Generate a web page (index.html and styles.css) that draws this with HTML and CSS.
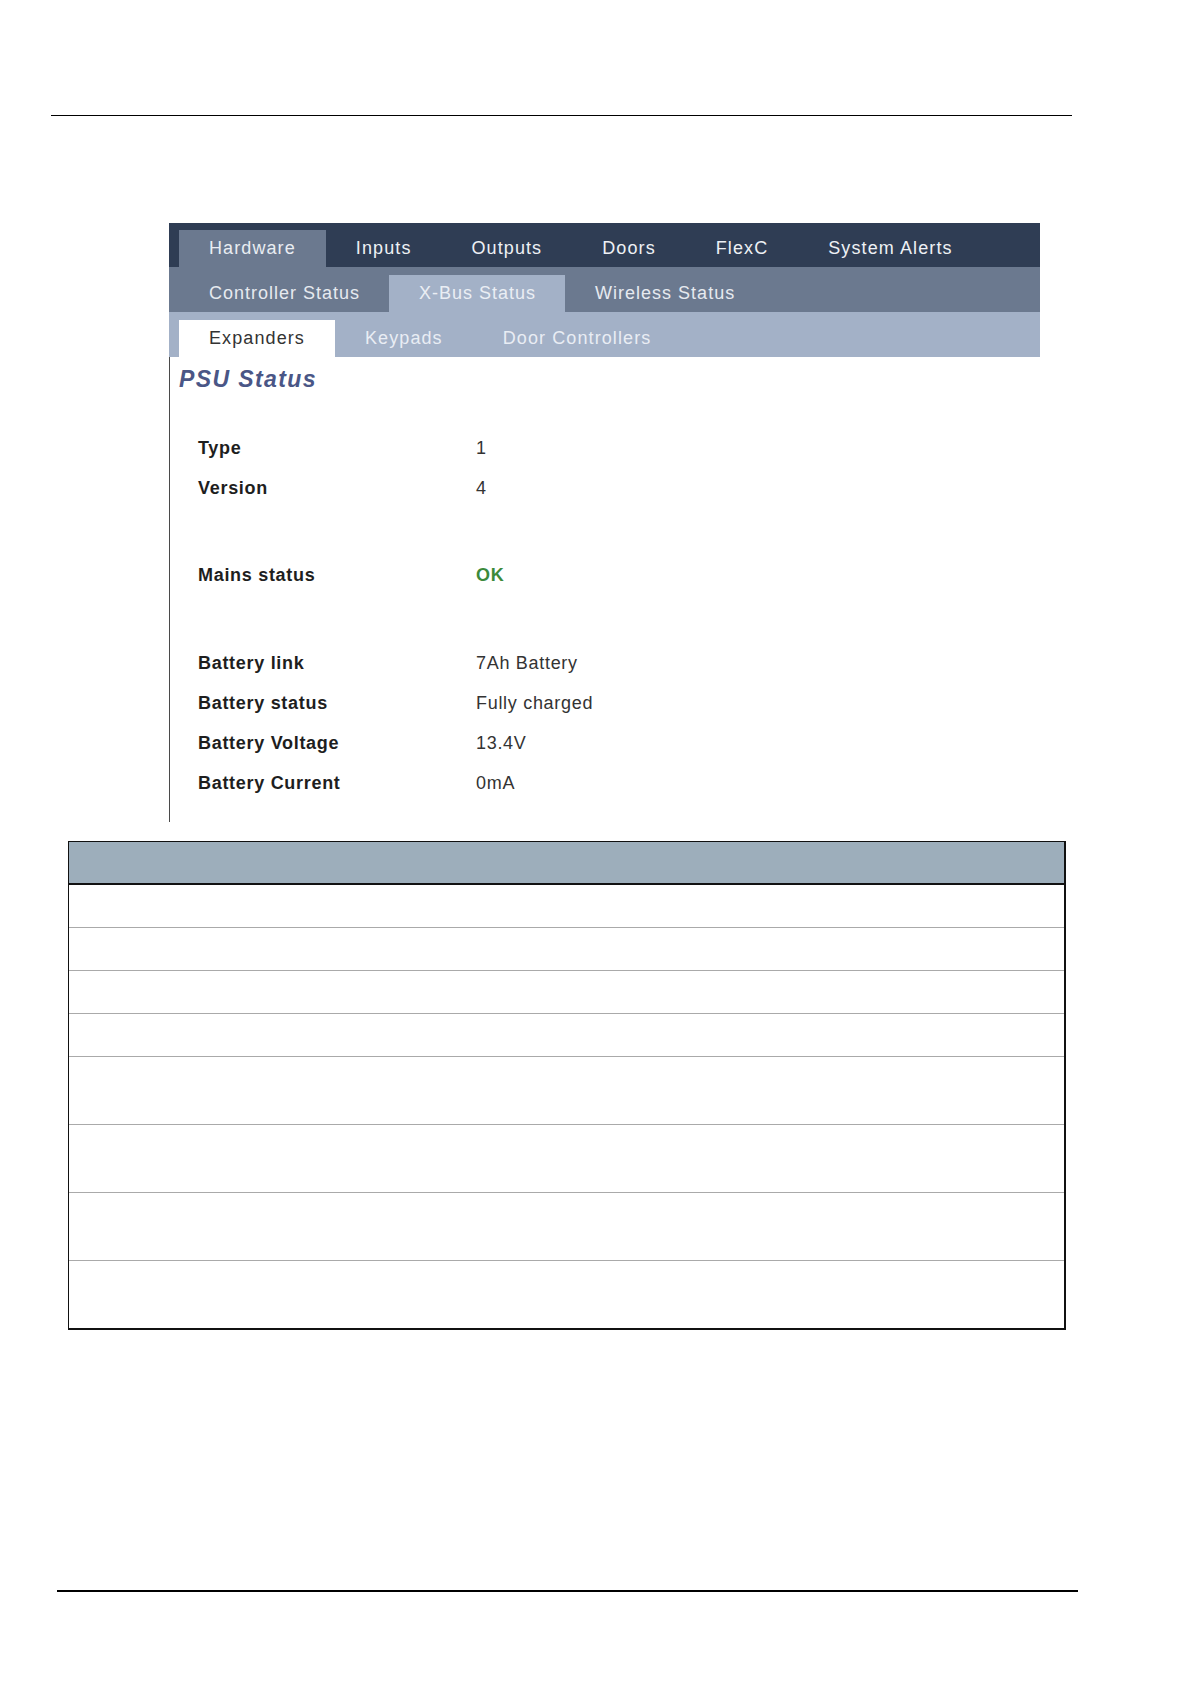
FILE: index.html
```html
<!DOCTYPE html>
<html>
<head>
<meta charset="utf-8">
<title>PSU Status</title>
<link rel="stylesheet" href="styles.css">
</head>
<body>
<div class="page">
  <div class="top-rule"></div>

  <div class="panel">
    <div class="nav nav-1">
      <div class="tab active">Hardware</div>
      <div class="tab">Inputs</div>
      <div class="tab">Outputs</div>
      <div class="tab">Doors</div>
      <div class="tab">FlexC</div>
      <div class="tab">System Alerts</div>
    </div>
    <div class="nav nav-2">
      <div class="tab">Controller Status</div>
      <div class="tab active">X-Bus Status</div>
      <div class="tab">Wireless Status</div>
    </div>
    <div class="nav nav-3">
      <div class="tab active">Expanders</div>
      <div class="tab">Keypads</div>
      <div class="tab">Door Controllers</div>
    </div>

    <div class="content">
      <h1 class="title">PSU Status</h1>
      <div class="fields">
        <div class="label">Type</div><div class="value">1</div>
        <div class="label">Version</div><div class="value">4</div>
        <div class="spacer"></div>
        <div class="label">Mains status</div><div class="value ok">OK</div>
        <div class="spacer"></div>
        <div class="label">Battery link</div><div class="value">7Ah Battery</div>
        <div class="label">Battery status</div><div class="value">Fully charged</div>
        <div class="label">Battery Voltage</div><div class="value">13.4V</div>
        <div class="label">Battery Current</div><div class="value">0mA</div>
      </div>
    </div>
  </div>

  <div class="doc-table">
    <div class="doc-head"></div>
    <div class="doc-row"></div>
    <div class="doc-row"></div>
    <div class="doc-row"></div>
    <div class="doc-row"></div>
    <div class="doc-row tall"></div>
    <div class="doc-row tall"></div>
    <div class="doc-row tall"></div>
    <div class="doc-row tall last"></div>
  </div>

  <div class="bottom-rule"></div>
</div>
</body>
</html>
```

FILE: styles.css
```css
* {
  box-sizing: border-box;
}

html, body {
  margin: 0;
  padding: 0;
  background: #ffffff;
}

body {
  font-family: "Liberation Sans", Arial, sans-serif;
  color: #222;
}

.page {
  width: 1191px;
  min-height: 1684px;
  padding-top: 115px;
  display: flex;
  flex-direction: column;
}

.top-rule {
  margin-left: 51px;
  width: 1021px;
  height: 0;
  border-top: 1px solid #000;
}

.panel {
  margin-top: 107px;
  margin-left: 169px;
  width: 871px;
}

.nav {
  display: flex;
  align-items: flex-end;
  padding-left: 10px;
}

.nav-1 {
  height: 44px;
  background: #2f3d54;
}

.nav-2 {
  height: 45px;
  background: #6b798f;
}

.nav-3 {
  height: 45px;
  background: #a3b1c7;
}

.tab {
  height: 37px;
  line-height: 37px;
  padding: 0 30px 0 30px;
  font-size: 18px;
  letter-spacing: 1.1px;
  white-space: nowrap;
}

.nav-2 .tab {
  padding-right: 29px;
  letter-spacing: 1px;
}

.nav-1 .tab {
  color: #eef1f5;
}

.nav-1 .tab.active {
  background: #6b798f;
  color: #e9edf2;
}

.nav-2 .tab {
  color: #e6eaef;
}

.nav-2 .tab.active {
  background: #a3b1c7;
  color: #eaeef4;
}

.nav-3 .tab {
  color: #e9edf4;
}

.nav-3 .tab.active {
  background: #ffffff;
  color: #333;
}

.content {
  border-left: 1px solid #4a4a4a;
  padding: 7px 0 19px 9px;
}

.title {
  margin: 0;
  font-size: 23px;
  line-height: 30px;
  font-weight: bold;
  font-style: italic;
  letter-spacing: 1.4px;
  color: #4a5686;
}

.fields {
  margin-top: 34px;
  padding-left: 19px;
  display: grid;
  grid-template-columns: 278px auto;
  grid-template-rows: 40px 40px 47px 40px 48px 40px 40px 40px 40px;
  font-size: 18px;
  letter-spacing: 0.7px;
  line-height: 40px;
}

.label {
  font-weight: bold;
  color: #1e1e1e;
}

.value {
  color: #333;
}

.value.ok {
  color: #3b8a3b;
  font-weight: bold;
}

.spacer {
  grid-column: 1 / span 2;
}

.doc-table {
  margin-top: 19px;
  margin-left: 68px;
  width: 998px;
  border-top: 1px solid #111;
  border-left: 1px solid #111;
  border-right: 2px solid #111;
  border-bottom: 2px solid #111;
}

.doc-head {
  height: 43px;
  background: #9daebb;
  border-bottom: 2px solid #111;
}

.doc-row {
  height: 43px;
  border-bottom: 1px solid #aaaaaa;
}

.doc-row.tall {
  height: 68px;
}

.doc-row.last {
  height: 67px;
  border-bottom: none;
}

.bottom-rule {
  margin-top: 260px;
  margin-left: 57px;
  width: 1021px;
  height: 0;
  border-top: 2px solid #000;
}
```
